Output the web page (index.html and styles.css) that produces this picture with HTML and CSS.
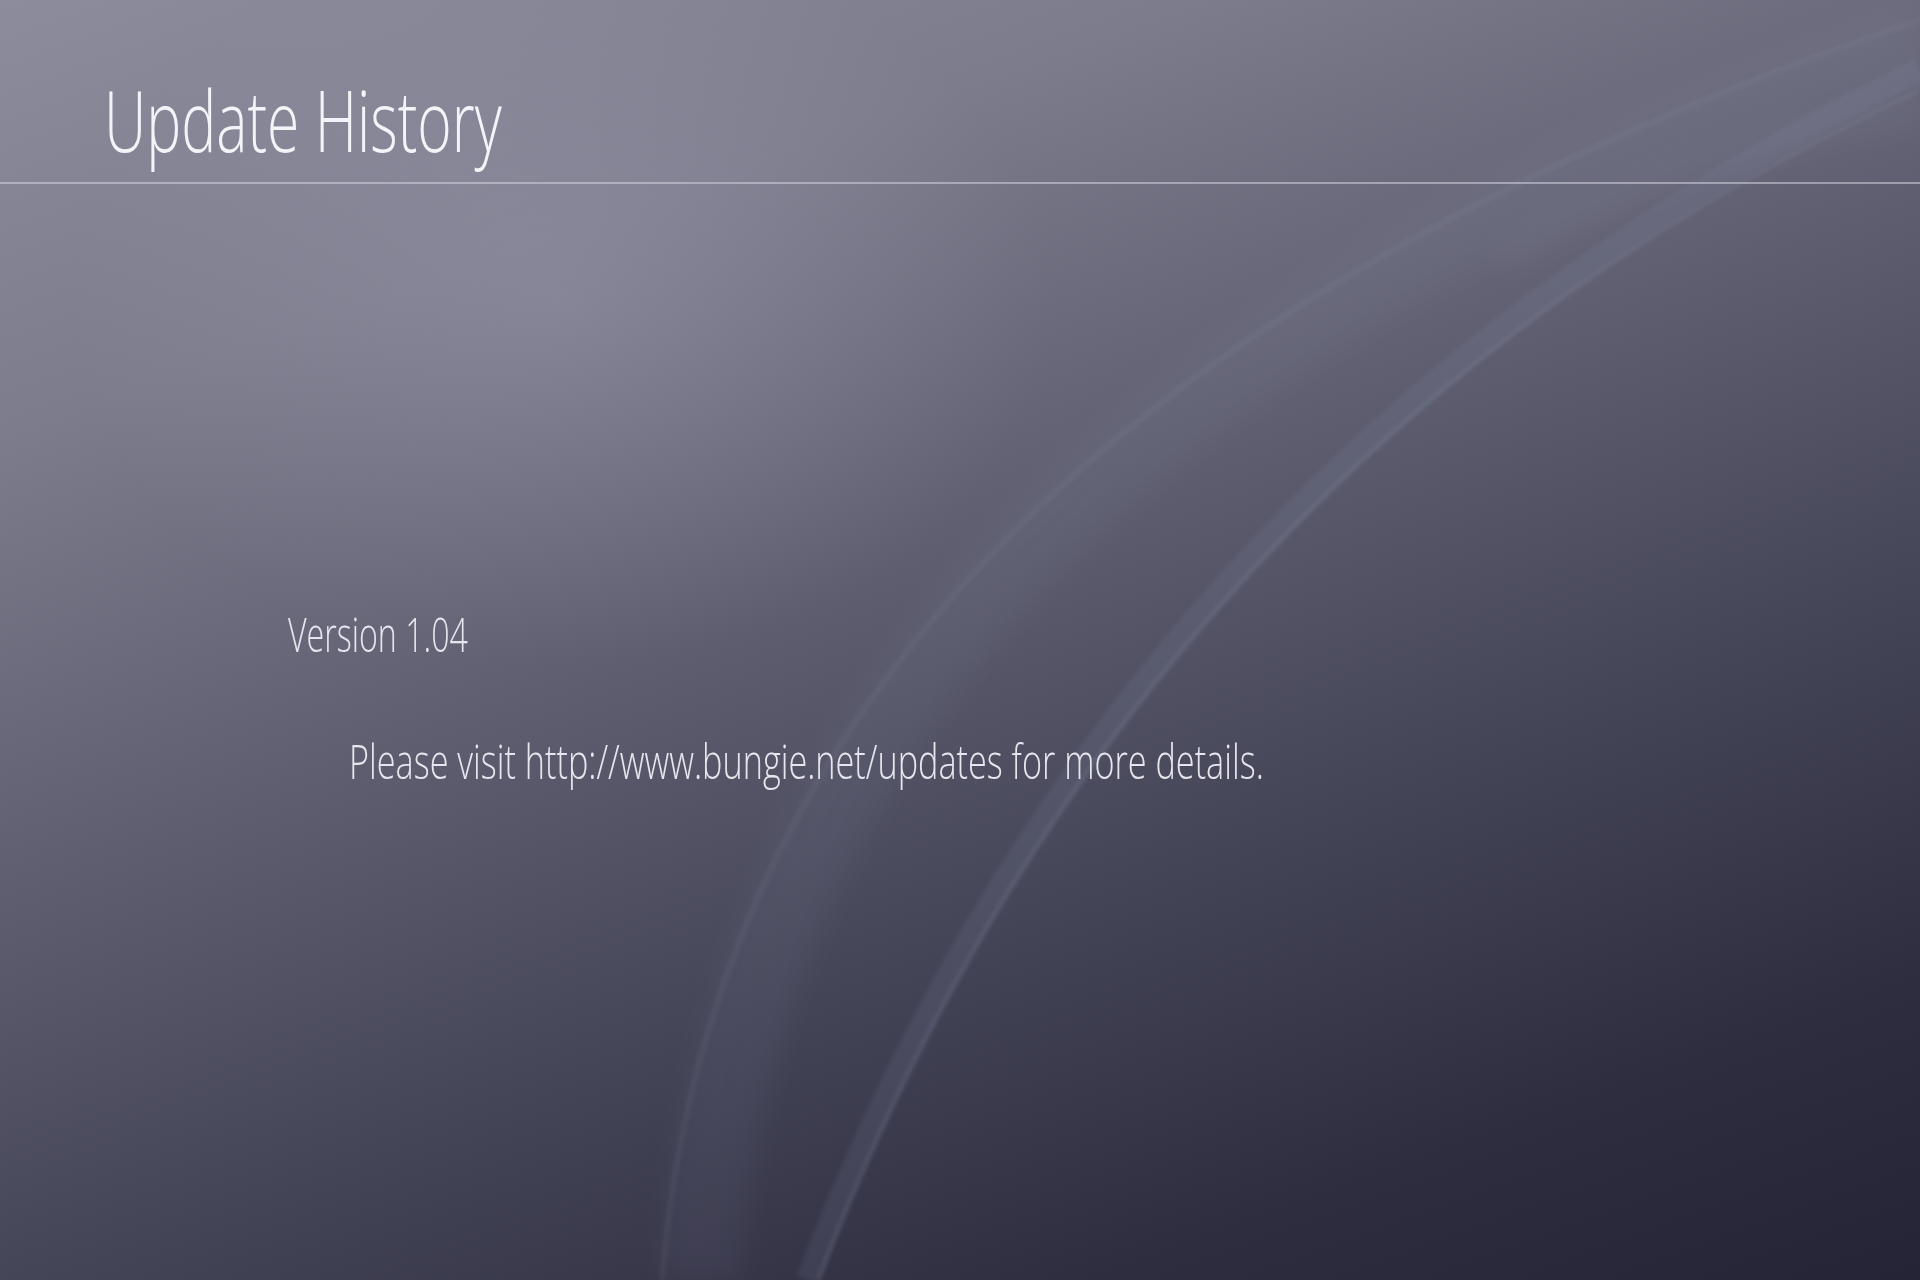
FILE: index.html
```html
<!DOCTYPE html>
<html lang="en">
<head>
<meta charset="UTF-8">
<meta name="viewport" content="width=device-width, initial-scale=1">
<title>Update History</title>
<link rel="stylesheet" href="styles.css">
</head>
<body>

<div class="screen">
  <!-- background waves -->
  <svg class="waves" width="1920" height="1280" viewBox="0 0 1920 1280" aria-hidden="true">
    <defs>
      <filter id="soft" x="-20%" y="-20%" width="140%" height="140%"><feGaussianBlur stdDeviation="14"/></filter>
      <filter id="softer" x="-20%" y="-20%" width="140%" height="140%"><feGaussianBlur stdDeviation="2"/></filter>
    </defs>
    <path d="M700 1280 Q760 420 1920 40" fill="none" stroke="#9a9fb8" stroke-width="80" opacity=".07" filter="url(#soft)"/>
    <path d="M662 1280 Q730 420 1920 20" fill="none" stroke="#aeb2c8" stroke-width="5" opacity=".09" filter="url(#softer)"/>
    <path d="M808 1280 Q1120 460 1920 70" fill="none" stroke="#8f9ab4" stroke-width="24" opacity=".12" filter="url(#softer)"/>
    <path d="M818 1280 Q1130 460 1920 90" fill="none" stroke="#b8c0d8" stroke-width="3" opacity=".15" filter="url(#softer)"/>
    <path d="M1500 260 Q1700 140 1920 110" fill="none" stroke="#a0a6bc" stroke-width="30" opacity=".08" filter="url(#soft)"/>
  </svg>

  <header class="title-bar">
    <h1 class="title">Update History</h1>
  </header>

  <main class="content">
    <section class="entry">
      <h2 class="version">Version 1.04</h2>
      <p class="note">Please visit http://www.bungie.net/updates for more details.</p>
    </section>
  </main>
</div>

</body>
</html>
```

FILE: styles.css
```css
html,body{margin:0;padding:0;}
body{font-family:"Open Sans",Lato,"DejaVu Sans",sans-serif;color:#ececf2;background:#3c3b4e;}

.screen{
  position:relative;width:1920px;height:1280px;overflow:hidden;
  background:
    radial-gradient(ellipse 700px 520px at 560px 300px, rgba(170,170,190,.28), rgba(170,170,190,0) 70%),
    linear-gradient(160deg,#8c8c9d 0%,#7c7c8d 22%,#5e5e70 45%,#454558 65%,#2e2d40 85%,#252436 100%);
}
.waves{position:absolute;left:0;top:0;pointer-events:none;}

.title-bar{
  position:relative;
  padding:78px 0 20px 104px;
  border-bottom:2px solid rgba(210,210,222,.55);
}
.title{
  margin:0;display:inline-block;
  font-size:84px;font-weight:300;line-height:1;color:#f4f4f8;
  transform:scaleX(.70);transform-origin:0 0;white-space:nowrap;
}

.content{position:relative;padding-top:426px;}
.entry{display:flex;flex-direction:column;align-items:flex-start;gap:79px;}
.version,.note{
  margin:0;display:inline-block;
  font-size:48px;font-weight:300;line-height:1;color:#e6e6ee;
  transform:scaleX(.67);transform-origin:0 0;white-space:nowrap;
}
.version{margin-left:288px;}
.note{margin-left:349px;transform:scaleX(.713);}
```
